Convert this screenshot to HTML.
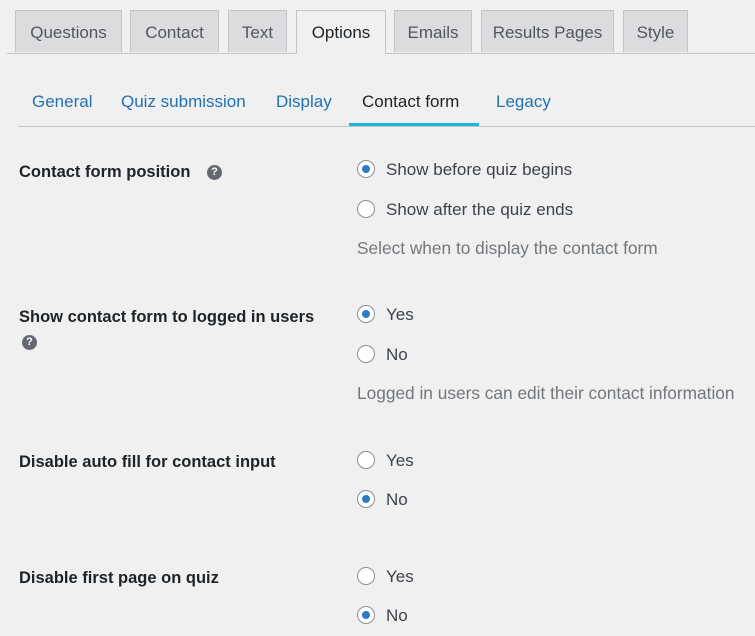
<!DOCTYPE html>
<html><head><style>
body{margin:0;width:755px;height:636px;background:#f0f0f1;font-family:"Liberation Sans",sans-serif;position:relative;overflow:hidden}
.a{position:absolute;white-space:nowrap}
.tab{position:absolute;top:10px;height:42px;background:#dcdcde;border:1px solid #c3c4c7;border-bottom:none;color:#50575e;font-size:17px;line-height:44px;text-align:center;box-sizing:border-box}
.tab.on{background:#f0f0f1;color:#1d2327;height:44px;z-index:2}
.sub{position:absolute;top:92px;font-size:17px;color:#2271b1}
.lbl{position:absolute;left:19px;font-size:16.5px;font-weight:bold;color:#1d2327}
.r{position:absolute;left:357px;width:18px;height:18px;border:1px solid #8c8f94;border-radius:50%;background:#fff;box-sizing:border-box}
.r.c::after{content:"";position:absolute;left:4px;top:4px;width:8px;height:8px;border-radius:50%;background:#2c7ac6}
.ot{position:absolute;left:386px;font-size:17px;color:#3c434a}
.d{position:absolute;left:357px;font-size:17.3px;color:#72777c}
.q{position:absolute;width:15px;height:15px;border-radius:50%;background:#646970;color:#fff;font-size:11px;font-weight:bold;text-align:center;line-height:15px}
</style></head><body>
<div class="a" style="left:7px;top:53px;width:748px;height:1px;background:#c3c4c7"></div>
<div class="tab" style="left:15px;width:107px">Questions</div>
<div class="tab" style="left:130px;width:89px">Contact</div>
<div class="tab" style="left:228px;width:59px">Text</div>
<div class="tab on" style="left:296px;width:90px">Options</div>
<div class="tab" style="left:394px;width:78px">Emails</div>
<div class="tab" style="left:481px;width:133px">Results Pages</div>
<div class="tab" style="left:623px;width:65px">Style</div>

<div class="a" style="left:18px;top:126px;width:737px;height:1px;background:#c3c4c7"></div>
<div class="a" style="left:349px;top:123px;width:130px;height:3px;background:#1cb5e0"></div>
<div class="sub" style="left:32px">General</div>
<div class="sub" style="left:121px">Quiz submission</div>
<div class="sub" style="left:276px">Display</div>
<div class="sub" style="left:362px;color:#1d2327">Contact form</div>
<div class="sub" style="left:496px">Legacy</div>

<div class="lbl" style="top:163px">Contact form position</div>
<div class="q" style="left:207px;top:165px">?</div>
<div class="r c" style="top:160px"></div><div class="ot" style="top:160px">Show before quiz begins</div>
<div class="r" style="top:200px"></div><div class="ot" style="top:200px">Show after the quiz ends</div>
<div class="d" style="top:238px">Select when to display the contact form</div>

<div class="lbl" style="top:308px">Show contact form to logged in users</div>
<div class="q" style="left:22px;top:335px">?</div>
<div class="r c" style="top:305px"></div><div class="ot" style="top:305px">Yes</div>
<div class="r" style="top:345px"></div><div class="ot" style="top:345px">No</div>
<div class="d" style="top:383px">Logged in users can edit their contact information</div>

<div class="lbl" style="top:453px">Disable auto fill for contact input</div>
<div class="r" style="top:451px"></div><div class="ot" style="top:451px">Yes</div>
<div class="r c" style="top:490px"></div><div class="ot" style="top:490px">No</div>

<div class="lbl" style="top:569px">Disable first page on quiz</div>
<div class="r" style="top:567px"></div><div class="ot" style="top:567px">Yes</div>
<div class="r c" style="top:606px"></div><div class="ot" style="top:606px">No</div>
</body></html>
